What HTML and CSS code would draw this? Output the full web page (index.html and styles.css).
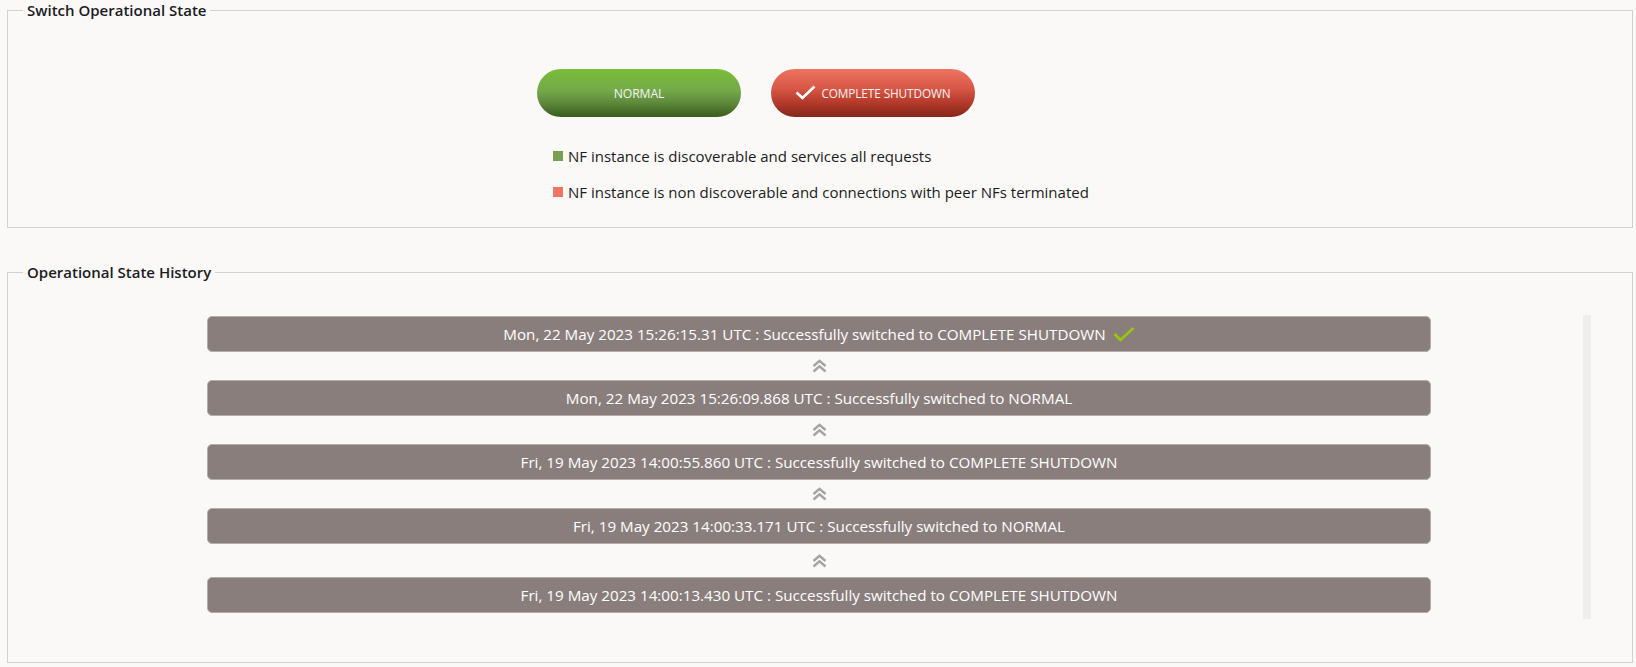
FILE: index.html
```html
<!DOCTYPE HTML>
<html lang="en">
  <head>
    <title>Operational State</title>
    <meta charset="utf-8">
    <link rel="stylesheet" href="styles.css">
  </head>
  <body>

  <fieldset class="panel panel-switch">
    <legend>Switch Operational State</legend>

    <div class="switch-body">
      <div class="state-buttons">
        <span class="state-btn normal">NORMAL</span>
        <span class="state-btn shutdown">
          <svg class="btn-check" width="21" height="15" viewBox="0 0 21 15"><path d="M1.5 7.5 L7.5 13 L19.5 1.5" fill="none" stroke="#ffffff" stroke-width="2.6"/></svg>
          COMPLETE SHUTDOWN
        </span>
      </div>

      <ul class="state-legend">
        <li><span class="swatch green"></span>NF instance is discoverable and services all requests</li>
        <li><span class="swatch red"></span>NF instance is non discoverable and connections with peer NFs terminated</li>
      </ul>
    </div>
  </fieldset>

  <fieldset class="panel panel-history">
    <legend>Operational State History</legend>

    <div class="history-scroll">
      <div class="history-list">
        <div class="history-row">Mon, 22 May 2023 15:26:15.31 UTC : Successfully switched to COMPLETE SHUTDOWN
          <svg class="row-check" width="22" height="16" viewBox="0 0 22 16"><path d="M1.5 8 L7.5 14 L20.5 2" fill="none" stroke="#97c90a" stroke-width="2.6"/></svg>
        </div>
        <div class="chevron"><svg width="17" height="14" viewBox="0 0 17 14"><path d="M2.5 7 L8.5 1.8 L14.5 7 M2.5 12.5 L8.5 7.3 L14.5 12.5" fill="none" stroke="#a5a3a1" stroke-width="2.4"/></svg></div>
        <div class="history-row">Mon, 22 May 2023 15:26:09.868 UTC : Successfully switched to NORMAL</div>
        <div class="chevron"><svg width="17" height="14" viewBox="0 0 17 14"><path d="M2.5 7 L8.5 1.8 L14.5 7 M2.5 12.5 L8.5 7.3 L14.5 12.5" fill="none" stroke="#a5a3a1" stroke-width="2.4"/></svg></div>
        <div class="history-row">Fri, 19 May 2023 14:00:55.860 UTC : Successfully switched to COMPLETE SHUTDOWN</div>
        <div class="chevron"><svg width="17" height="14" viewBox="0 0 17 14"><path d="M2.5 7 L8.5 1.8 L14.5 7 M2.5 12.5 L8.5 7.3 L14.5 12.5" fill="none" stroke="#a5a3a1" stroke-width="2.4"/></svg></div>
        <div class="history-row">Fri, 19 May 2023 14:00:33.171 UTC : Successfully switched to NORMAL</div>
        <div class="chevron last"><svg width="17" height="14" viewBox="0 0 17 14"><path d="M2.5 7 L8.5 1.8 L14.5 7 M2.5 12.5 L8.5 7.3 L14.5 12.5" fill="none" stroke="#a5a3a1" stroke-width="2.4"/></svg></div>
        <div class="history-row">Fri, 19 May 2023 14:00:13.430 UTC : Successfully switched to COMPLETE SHUTDOWN</div>
      </div>
      <div class="scroll-track"></div>
    </div>
  </fieldset>

  </body>
</html>
```

FILE: styles.css
```css
html {
  height: 100%;
}
body {
  margin: 0;
  padding: 0 3px 0 7px;
  background: #faf9f7;
  color: #1b1b24;
  font-family: "Open Sans", "Noto Sans", sans-serif;
  font-size: 15px;
}

.panel {
  margin: 0;
  padding: 0 0 0 15px;
  border: 1px solid #d3d1cf;
  min-width: 0;
}

.panel legend {
  padding: 0 4px;
  font-size: 15px;
  font-weight: 600;
  line-height: 20px;
}

.panel-history {
  margin-top: 34px;
}

/* switch section */

.switch-body {
  width: 566px;
  margin: 0 auto;
  padding: 49px 15px 17px 0;
}

.state-buttons {
  display: flex;
  gap: 30px;
}

.state-btn {
  display: flex;
  align-items: center;
  justify-content: center;
  gap: 5px;
  width: 204px;
  height: 48px;
  border-radius: 24px;
  color: #f4f4f0;
  font-size: 11.8px;
  letter-spacing: -0.1px;
}

.state-btn.normal {
  background: linear-gradient(#7bbd39 0%, #74a94a 45%, #5e8a3c 70%, #3b5b1c 100%);
  font-size: 12.2px;
}

.state-btn.shutdown {
  background: linear-gradient(#ee7461 0%, #d85746 40%, #b43a2b 70%, #84261a 100%);
}

.btn-check {
  margin-top: -2px;
}

.state-legend {
  list-style: none;
  margin: 21px 0 0;
  padding: 0 0 0 16px;
}

.state-legend li {
  display: flex;
  align-items: center;
  height: 36px;
  font-size: 15px;
}

.swatch {
  width: 10px;
  height: 10px;
  margin-right: 5px;
}
.swatch.green {
  background: #7aa152;
}
.swatch.red {
  background: #ef7565;
}

/* history section */

.history-scroll {
  display: flex;
  margin: 33px 41px 43px 32px;
}

.history-list {
  flex: 1;
  display: flex;
  flex-direction: column;
  align-items: center;
  padding: 1px 0 6px;
}

.history-row {
  display: flex;
  align-items: center;
  justify-content: center;
  gap: 7px;
  width: 1224px;
  height: 36px;
  box-sizing: border-box;
  background: #8a7e7d;
  border: 1px solid #b3aeac;
  border-radius: 5px;
  color: #ffffff;
  font-size: 15.2px;
}

.chevron {
  display: flex;
  align-items: center;
  justify-content: center;
  height: 28px;
}
.chevron.last {
  height: 33px;
}

.scroll-track {
  width: 8px;
  background: #efeeec;
}
```
